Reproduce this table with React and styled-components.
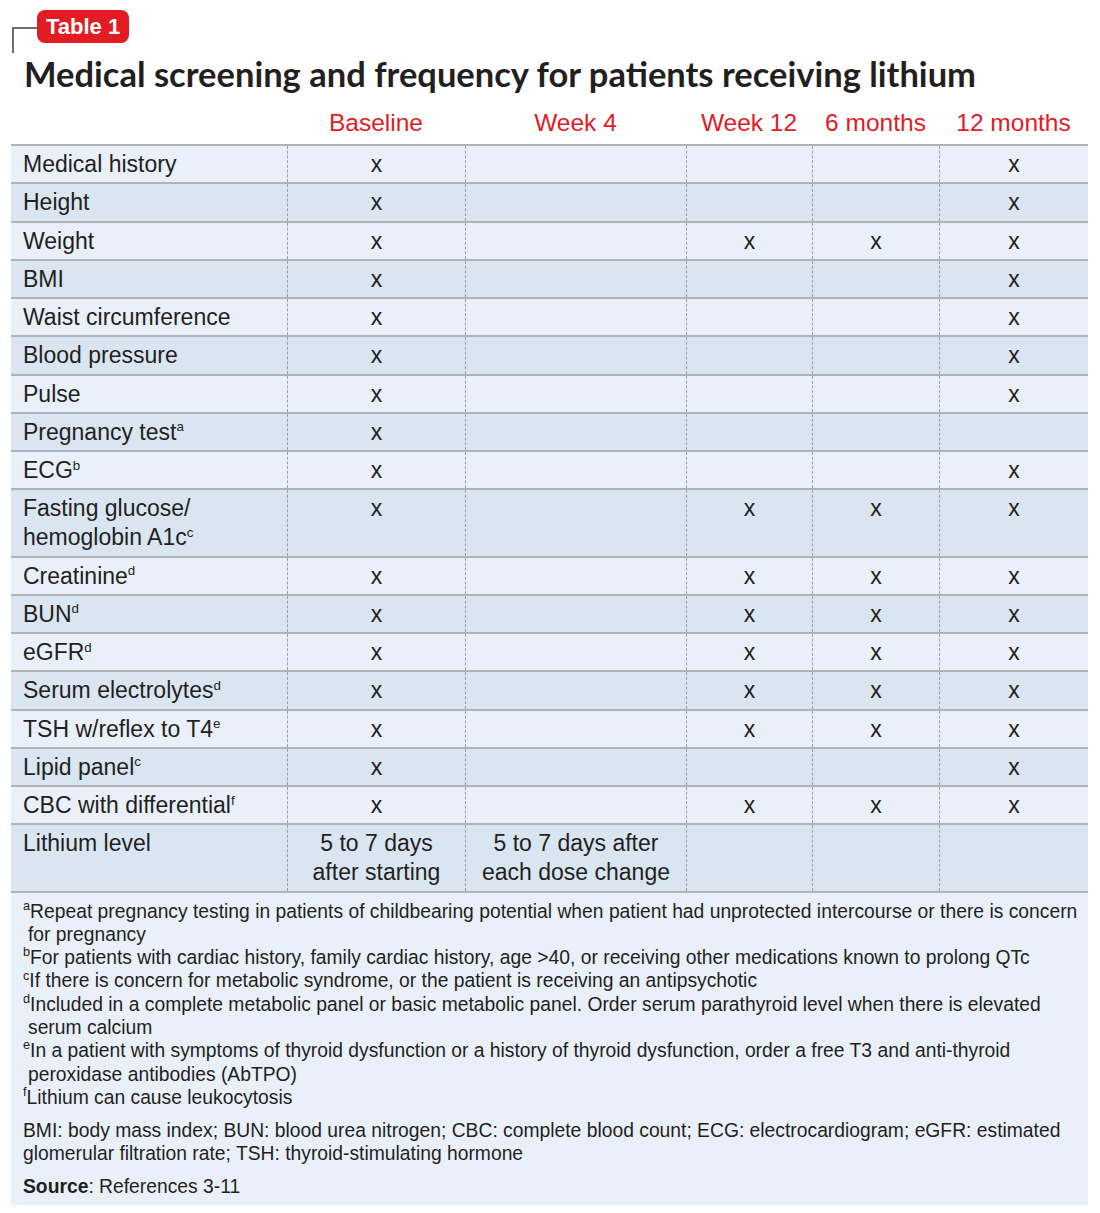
import styled, { createGlobalStyle } from "styled-components"

const GlobalStyle = createGlobalStyle`
    body {
        margin: 0;
        background: #ffffff;
        font-family: "Liberation Sans", Arial, sans-serif;
        color: #231f20;
    }
`

const Page = styled.div`
    width: 1100px;
    padding: 10px 12px 10px 11px;
    box-sizing: border-box;
`

const TagRow = styled.div`
    display: flex;
    align-items: flex-start;
    height: 33px;
`

const Bracket = styled.div`
    width: 23px;
    height: 24px;
    margin: 17px 0 0 1px;
    border-top: 2px solid #6d6e70;
    border-left: 2px solid #6d6e70;
`

const Badge = styled.div`
    background: #e31b23;
    color: #ffffff;
    font-weight: bold;
    font-size: 22px;
    line-height: 33px;
    height: 33px;
    padding: 0 9px;
    border-radius: 8px;
`

const Title = styled.h1`
    margin: 10px 0 0 13px;
    font-family: Lato, "Open Sans", sans-serif;
    font-weight: 700;
    font-size: 34.5px;
    line-height: 42px;
    color: #231f20;
`

const cols = "276px 178px 221px 126px 127px 149px"

const HeadRow = styled.div`
    display: grid;
    grid-template-columns: ${cols};
    margin-top: 13px;
    padding-bottom: 6px;
`

const HeadCell = styled.div`
    color: #e31b23;
    font-size: 24.5px;
    line-height: 30px;
    text-align: center;
`

const Row = styled.div`
    display: grid;
    grid-template-columns: ${cols};
    background: ${p => (p.$shade ? "#d9e6f2" : "#eaf0f9")};
    border-top: 2px solid #b0b4b9;
    border-bottom: ${p => (p.$last ? "2px solid #b0b4b9" : "none")};
`

const Cell = styled.div`
    font-size: 23px;
    line-height: 29px;
    padding: 4px 0 3.25px;
    text-align: ${p => (p.$label ? "left" : "center")};
    padding-left: ${p => (p.$label ? "12px" : "0")};
    border-left: ${p => (p.$label ? "none" : "1px dashed #9a9ea3")};
`

const Sup = styled.sup`
    font-size: ${p => p.$size || "0.58em"};
    line-height: 0;
    vertical-align: baseline;
    position: relative;
    top: -0.62em;
`

const Notes = styled.div`
    background: #eaf0f9;
    padding: 7px 12px 7px 12px;
    font-size: 19.3px;
    line-height: 23.3px;
    white-space: nowrap;
`

const Note = styled.div`
    padding-left: 5px;
    text-indent: -5px;
`

const Para = styled.div`
    margin-top: ${p => p.$gap || 0}px;
`

const X = "x"

const rows = [
    ["Medical history", null, [X, "", "", "", X]],
    ["Height", null, [X, "", "", "", X]],
    ["Weight", null, [X, "", X, X, X]],
    ["BMI", null, [X, "", "", "", X]],
    ["Waist circumference", null, [X, "", "", "", X]],
    ["Blood pressure", null, [X, "", "", "", X]],
    ["Pulse", null, [X, "", "", "", X]],
    ["Pregnancy test", "a", [X, "", "", "", ""]],
    ["ECG", "b", [X, "", "", "", X]],
    [["Fasting glucose/", "hemoglobin A1c"], "c", [X, "", X, X, X]],
    ["Creatinine", "d", [X, "", X, X, X]],
    ["BUN", "d", [X, "", X, X, X]],
    ["eGFR", "d", [X, "", X, X, X]],
    ["Serum electrolytes", "d", [X, "", X, X, X]],
    ["TSH w/reflex to T4", "e", [X, "", X, X, X]],
    ["Lipid panel", "c", [X, "", "", "", X]],
    ["CBC with differential", "f", [X, "", X, X, X]],
    ["Lithium level", null, [["5 to 7 days", "after starting"], ["5 to 7 days after", "each dose change"], "", "", ""]],
]

const notes = [
    ["a", ["Repeat pregnancy testing in patients of childbearing potential when patient had unprotected intercourse or there is concern", "for pregnancy"]],
    ["b", ["For patients with cardiac history, family cardiac history, age >40, or receiving other medications known to prolong QTc"]],
    ["c", ["If there is concern for metabolic syndrome, or the patient is receiving an antipsychotic"]],
    ["d", ["Included in a complete metabolic panel or basic metabolic panel. Order serum parathyroid level when there is elevated", "serum calcium"]],
    ["e", ["In a patient with symptoms of thyroid dysfunction or a history of thyroid dysfunction, order a free T3 and anti-thyroid", "peroxidase antibodies (AbTPO)"]],
    ["f", ["Lithium can cause leukocytosis"]],
]

const Lines = ({ value }) =>
    Array.isArray(value)
        ? value.map((line, i) => (
              <span key={i}>
                  {i > 0 && <br />}
                  {line}
              </span>
          ))
        : value

const App = () => {
    return (
        <Page>
            <GlobalStyle />
            <TagRow>
                <Bracket />
                <Badge>Table 1</Badge>
            </TagRow>
            <Title>Medical screening and frequency for patients receiving lithium</Title>

            <HeadRow>
                <div />
                <HeadCell>Baseline</HeadCell>
                <HeadCell>Week 4</HeadCell>
                <HeadCell>Week 12</HeadCell>
                <HeadCell>6 months</HeadCell>
                <HeadCell>12 months</HeadCell>
            </HeadRow>

            {rows.map(([label, note, values], i) => (
                <Row key={i} $shade={i % 2 === 1} $last={i === rows.length - 1}>
                    <Cell $label>
                        <Lines value={label} />
                        {note && <Sup>{note}</Sup>}
                    </Cell>
                    {values.map((v, j) => (
                        <Cell key={j}>
                            <Lines value={v} />
                        </Cell>
                    ))}
                </Row>
            ))}

            <Notes>
                {notes.map(([mark, text]) => (
                    <Note key={mark}>
                        <Sup $size="0.66em">{mark}</Sup>
                        <Lines value={text} />
                    </Note>
                ))}
                <Para $gap={10}>
                    BMI: body mass index; BUN: blood urea nitrogen; CBC: complete blood count; ECG: electrocardiogram; eGFR: estimated
                    <br />
                    glomerular filtration rate; TSH: thyroid-stimulating hormone
                </Para>
                <Para $gap={9}>
                    <b>Source</b>: References 3-11
                </Para>
            </Notes>
        </Page>
    )
}

export default App
